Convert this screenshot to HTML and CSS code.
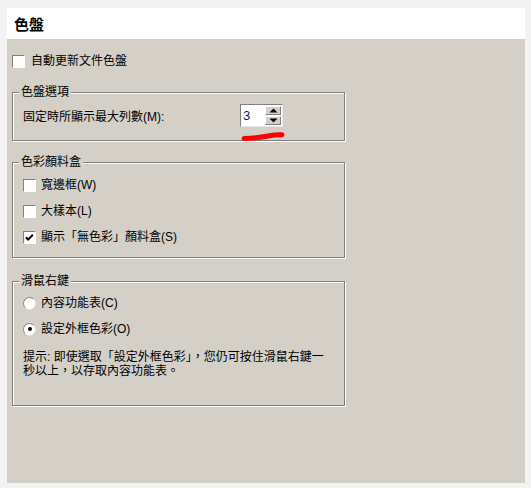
FILE: index.html
```html
<!DOCTYPE html>
<html lang="zh-Hant">
<head>
<meta charset="utf-8">
<link rel="stylesheet" href="styles.css">
</head>
<body>
<div class="window">
  <div class="header">色盤</div>
  <div class="body">
    <div class="row auto">
      <span class="check"></span><span>自動更新文件色盤</span>
    </div>

    <div class="group g1">
      <span class="legend">色盤選項</span>
      <div class="spinrow">
        <span class="spinlabel">固定時所顯示最大列數(M):</span>
        <div class="spin">
          <span class="spinval">3</span>
          <div class="spinbtns">
            <span class="sbtn"><svg width="9" height="5" viewBox="0 0 9 5"><path d="M0.5 4.5 L4.5 0.5 L8.5 4.5 Z" fill="#000"/></svg></span>
            <span class="sbtn"><svg width="9" height="5" viewBox="0 0 9 5"><path d="M0.5 0.5 L4.5 4.5 L8.5 0.5 Z" fill="#000"/></svg></span>
          </div>
        </div>
      </div>
      <svg class="scribble" width="46" height="11" viewBox="0 0 46 11"><path d="M4 7.5 Q18 7 28 5 Q35 3.6 42 3.8" stroke="#f00" stroke-width="5" fill="none" stroke-linecap="round"/></svg>
    </div>

    <div class="group g2">
      <span class="legend">色彩顏料盒</span>
      <div class="row item"><span class="check"></span><span>寬邊框(W)</span></div>
      <div class="row item"><span class="check"></span><span>大樣本(L)</span></div>
      <div class="row item"><span class="check"><svg width="11" height="11" viewBox="0 0 11 11"><path d="M2 5.2 L4.2 7.6 L8.8 2.8" stroke="#000" stroke-width="2" fill="none"/></svg></span><span>顯示「無色彩」顏料盒(S)</span></div>
    </div>

    <div class="group g3">
      <span class="legend">滑鼠右鍵</span>
      <div class="row item"><span class="radio"></span><span>內容功能表(C)</span></div>
      <div class="row item"><span class="radio on"><span class="dot"></span></span><span>設定外框色彩(O)</span></div>
      <p class="hint">提示: 即使選取「設定外框色彩」，您仍可按住滑鼠右鍵一<br>秒以上，以存取內容功能表。</p>
    </div>
  </div>
</div>
</body>
</html>
```

FILE: styles.css
```css
html, body {
  margin: 0;
  padding: 0;
}
body {
  background: #f3f3f3;
  font-family: "Liberation Sans", "Noto Sans CJK TC", sans-serif;
  font-size: 12px;
  color: #000;
}
.window {
  margin: 8px 0 0 7px;
  width: 518px;
  height: 475px;
  background: #d4d0c8;
  display: flex;
  flex-direction: column;
}
.header {
  background: #fff;
  height: 29px;
  padding-top: 2px;
  line-height: 29px;
  padding-left: 7px;
  font-size: 15px;
  font-weight: bold;
}
.body {
  padding: 15px 0 0 5px;
}
.row {
  display: flex;
  align-items: center;
  gap: 6px;
  line-height: 14px;
}
.auto {
  height: 14px;
  margin-bottom: 24px;
}
.check {
  width: 13px;
  height: 13px;
  box-sizing: border-box;
  background: #fff;
  border: 1px solid;
  border-color: #808080 #ffffff #ffffff #808080;
  display: flex;
  align-items: center;
  justify-content: center;
  flex: none;
}
.group {
  position: relative;
  width: 333px;
  box-sizing: border-box;
  border: 1px solid #808080;
  box-shadow: 1px 1px 0 #fff, inset 1px 1px 0 #fff;
  padding: 0 10px;
}
.legend {
  position: absolute;
  top: -8px;
  left: 6px;
  padding: 0 2px;
  background: #d4d0c8;
  line-height: 14px;
}
.g1 {
  height: 49px;
  padding-top: 11px;
  margin-bottom: 21px;
}
.spinrow {
  display: flex;
  align-items: center;
}
.spinlabel {
  width: 217px;
  flex: none;
}
.spin {
  width: 43px;
  height: 23px;
  box-sizing: border-box;
  border: 1px solid;
  border-color: #808080 #e8e8e8 #e8e8e8 #808080;
  background: #fff;
  display: flex;
}
.spinval {
  flex: 1;
  padding-left: 2px;
  line-height: 21px;
  font-size: 13px;
  color: #0a1a50;
}
.spinbtns {
  width: 16px;
  display: flex;
  flex-direction: column;
  padding: 1px 1px 1px 0;
  gap: 1px;
}
.sbtn {
  flex: 1;
  background: #d4d0c8;
  border: 1px solid;
  border-color: #fff #808080 #808080 #fff;
  display: flex;
  align-items: center;
  justify-content: center;
}
.scribble {
  position: absolute;
  left: 227px;
  top: 38px;
}
.g2 {
  height: 96px;
  padding-top: 9px;
  margin-bottom: 23px;
}
.item {
  height: 26px;
  gap: 5px;
}
.g3 {
  height: 125px;
  padding-top: 8px;
}
.radio {
  width: 13px;
  height: 13px;
  box-sizing: border-box;
  border-radius: 50%;
  background: #fff;
  border: 1px solid;
  border-color: #8a8a8a #e0e0e0 #e0e0e0 #8a8a8a;
  display: flex;
  align-items: center;
  justify-content: center;
  flex: none;
}
.dot {
  width: 4px;
  height: 4px;
  border-radius: 50%;
  background: #000;
}
.hint {
  margin: 8px 0 0;
  line-height: 14px;
}
```
